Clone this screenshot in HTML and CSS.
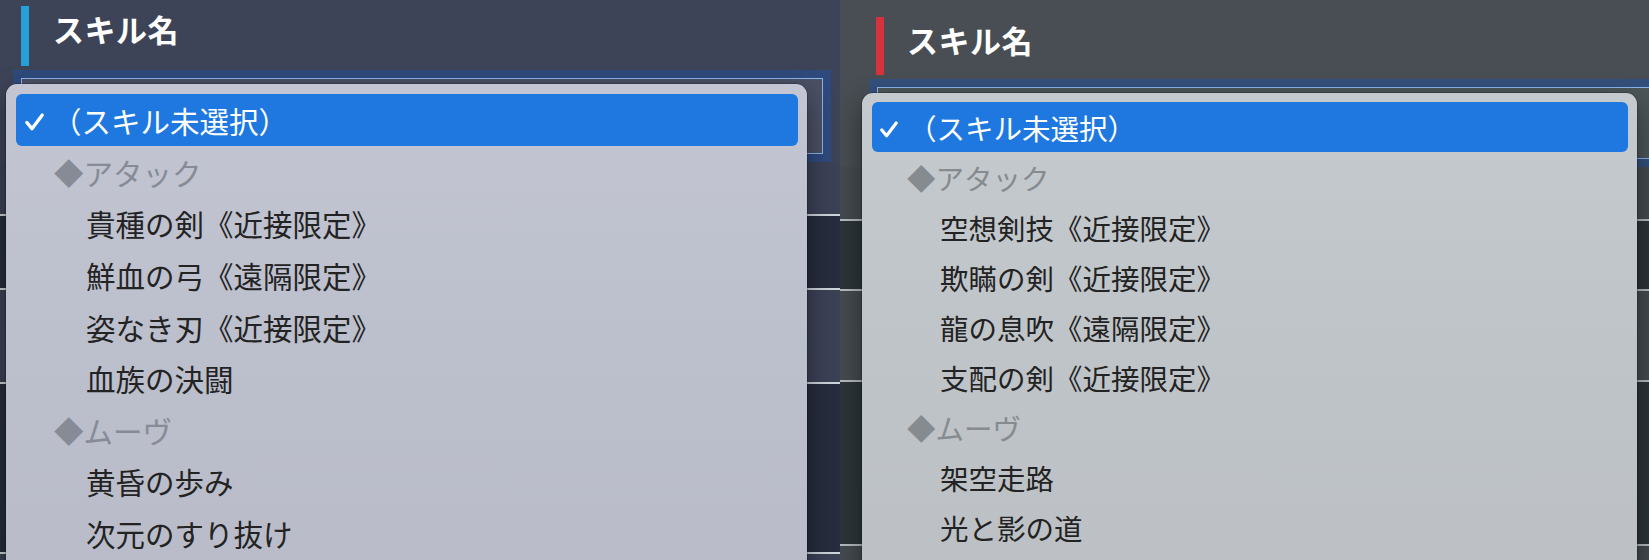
FILE: index.html
```html
<!DOCTYPE html>
<html lang="ja">
<head>
<meta charset="utf-8">
<title>スキル名</title>
<link rel="stylesheet" href="styles.css">
</head>
<body>
<main class="shots">
  <section class="panel panel-a">
    <header class="heading">
      <span class="heading-bar"></span>
      <h2 class="heading-title">スキル名</h2>
    </header>
    <div class="field"><div class="field-inner"></div></div>
    <div class="rows">
      <div class="row row-mid r1"></div>
      <div class="row row-dark r2"></div>
      <div class="row row-mid r3"></div>
      <div class="row row-dark r4"></div>
      <div class="row row-mid r5"></div>
    </div>
    <ul class="menu">
      <li class="opt opt-selected">
        <svg class="check" viewBox="0 0 18 17" aria-hidden="true"><path d="M1.8 9 L6.6 14.8 L16.2 2"/></svg>
        <span>（スキル未選択）</span>
      </li>
      <li class="opt opt-group">◆アタック</li>
      <li class="opt opt-item">貴種の剣《近接限定》</li>
      <li class="opt opt-item">鮮血の弓《遠隔限定》</li>
      <li class="opt opt-item">姿なき刃《近接限定》</li>
      <li class="opt opt-item">血族の決闘</li>
      <li class="opt opt-group">◆ムーヴ</li>
      <li class="opt opt-item">黄昏の歩み</li>
      <li class="opt opt-item">次元のすり抜け</li>
    </ul>
  </section>
  <section class="panel panel-b">
    <header class="heading">
      <span class="heading-bar"></span>
      <h2 class="heading-title">スキル名</h2>
    </header>
    <div class="field"><div class="field-inner"></div></div>
    <div class="rows">
      <div class="row row-mid r1"></div>
      <div class="row row-dark r2"></div>
      <div class="row row-mid r3"></div>
      <div class="row row-dark r4"></div>
      <div class="row row-mid r5"></div>
    </div>
    <ul class="menu">
      <li class="opt opt-selected">
        <svg class="check" viewBox="0 0 18 17" aria-hidden="true"><path d="M1.8 9 L6.6 14.8 L16.2 2"/></svg>
        <span>（スキル未選択）</span>
      </li>
      <li class="opt opt-group">◆アタック</li>
      <li class="opt opt-item">空想剣技《近接限定》</li>
      <li class="opt opt-item">欺瞞の剣《近接限定》</li>
      <li class="opt opt-item">龍の息吹《遠隔限定》</li>
      <li class="opt opt-item">支配の剣《近接限定》</li>
      <li class="opt opt-group">◆ムーヴ</li>
      <li class="opt opt-item">架空走路</li>
      <li class="opt opt-item">光と影の道</li>
    </ul>
  </section>
</main>
</body>
</html>
```

FILE: styles.css
```css
* { box-sizing: border-box; }

html, body {
  margin: 0;
  padding: 0;
  height: 560px;
  overflow: hidden;
  background: #3e4458;
  font-family: "Noto Sans CJK JP", "Noto Sans", sans-serif;
  text-spacing-trim: space-all;
  font-kerning: none;
}

.shots {
  display: flex;
  height: 560px;
}

.panel {
  position: relative;
  overflow: hidden;
  height: 560px;
  display: flex;
  flex-direction: column;
}

.panel-a {
  width: 840px;
  background: linear-gradient(180deg, #3e4458 0%, #3d4357 100%);
}

.panel-b {
  width: 809px;
  background: linear-gradient(180deg, #484e53 0%, #474d52 100%);
}

/* heading */
.heading {
  display: flex;
  align-items: flex-start;
  flex: none;
}

.heading-bar {
  display: block;
  width: 8px;
  flex: none;
}

.heading-title {
  margin: 0;
  font-size: 31px;
  line-height: 30px;
  font-weight: 700;
  color: #ffffff;
  letter-spacing: 0.5px;
}

.panel-a .heading { padding: 6px 0 0 21px; }
.panel-a .heading-bar { height: 60px; background: #279fdb; }
.panel-a .heading-title { margin: 8px 0 0 24px; }

.panel-b .heading { padding: 17px 0 0 36px; }
.panel-b .heading-bar { height: 58px; background: #d8323f; }
.panel-b .heading-title { margin: 8px 0 0 23px; }

/* focused select field */
.field {
  flex: none;
  padding: 8px;
}

.field-inner {
  height: 100%;
  border: 1.5px solid #8cb5ef;
}

.panel-a .field {
  margin: 4px 9px 0 13px;
  height: 92px;
  background: #2f4a7c;
}
.panel-a .field-inner { background: #4b5065; }

.panel-b .field {
  margin: 4px -60px 0 29px;
  height: 88px;
  background: #33507c;
}
.panel-b .field-inner { background: #4c5659; }

/* table rows behind the menu */
.rows {
  flex: 1;
  display: flex;
  flex-direction: column;
}

.row { flex: none; }

.panel-a .row { border-bottom: 2px solid #cfd3dc; }
.panel-a .row-mid { background: #3c4256; }
.panel-a .row-dark { background: #272d3e; }
.panel-a .r1 { height: 54px; }
.panel-a .r2 { height: 74px; }
.panel-a .r3 { height: 94px; }
.panel-a .r4 { height: 170px; }
.panel-a .r5 { flex: 1; border-bottom: 0; }

.panel-b .row { border-bottom: 2px solid #b6bcc0; }
.panel-b .row-mid { background: #454b50; }
.panel-b .row-dark { background: #2d3538; }
.panel-b .r1 { height: 54px; }
.panel-b .r2 { height: 70px; }
.panel-b .r3 { height: 91px; }
.panel-b .r4 { height: 164px; }
.panel-b .r5 { flex: 1; border-bottom: 0; }

/* dropdown menu */
.menu {
  position: absolute;
  margin: 0;
  list-style: none;
  border-radius: 11px;
  bottom: -40px;
  box-shadow: 0 0 0 0.5px rgba(0, 0, 0, 0.35), 0 10px 28px rgba(0, 0, 0, 0.45);
}

.panel-a .menu {
  left: 6px;
  top: 84px;
  width: 801px;
  padding: 10px 9px 0 10px;
  background: linear-gradient(180deg, #c3c6d2 0%, #bcbfcc 50%, #b9bcc8 100%);
}

.panel-b .menu {
  left: 22px;
  top: 93px;
  width: 775px;
  padding: 9px 9px 0 10px;
  background: linear-gradient(180deg, #c5cacf 0%, #bfc4c8 50%, #bcc0c4 100%);
}

.opt {
  display: flex;
  align-items: center;
  white-space: nowrap;
  color: #232323;
}

.panel-a .opt { height: 51.6px; font-size: 29.5px; }
.panel-b .opt { height: 50px; font-size: 28.5px; }

.opt-selected {
  background: #1e78e0;
  color: #ffffff;
  border-radius: 6px;
}

.panel-a .opt-selected { height: 52px; padding-left: 9px; }
.panel-b .opt-selected { height: 50px; padding-left: 8px; }

.check {
  flex: none;
  fill: none;
  stroke: #ffffff;
  stroke-width: 3.2;
  stroke-linecap: round;
  stroke-linejoin: round;
}

.panel-a .check { width: 19px; height: 18px; margin-right: 8px; margin-top: 4px; }
.panel-b .check { width: 18px; height: 17px; margin-right: 10px; margin-top: 4px; }

.opt-group { color: #878b96; }
.panel-b .opt-group { color: #868b8f; }

.panel-a .opt-group { padding-left: 38px; }
.panel-a .opt-item { padding-left: 70px; }

.panel-b .opt-group { padding-left: 35px; }
.panel-b .opt-item { padding-left: 68px; }
```
